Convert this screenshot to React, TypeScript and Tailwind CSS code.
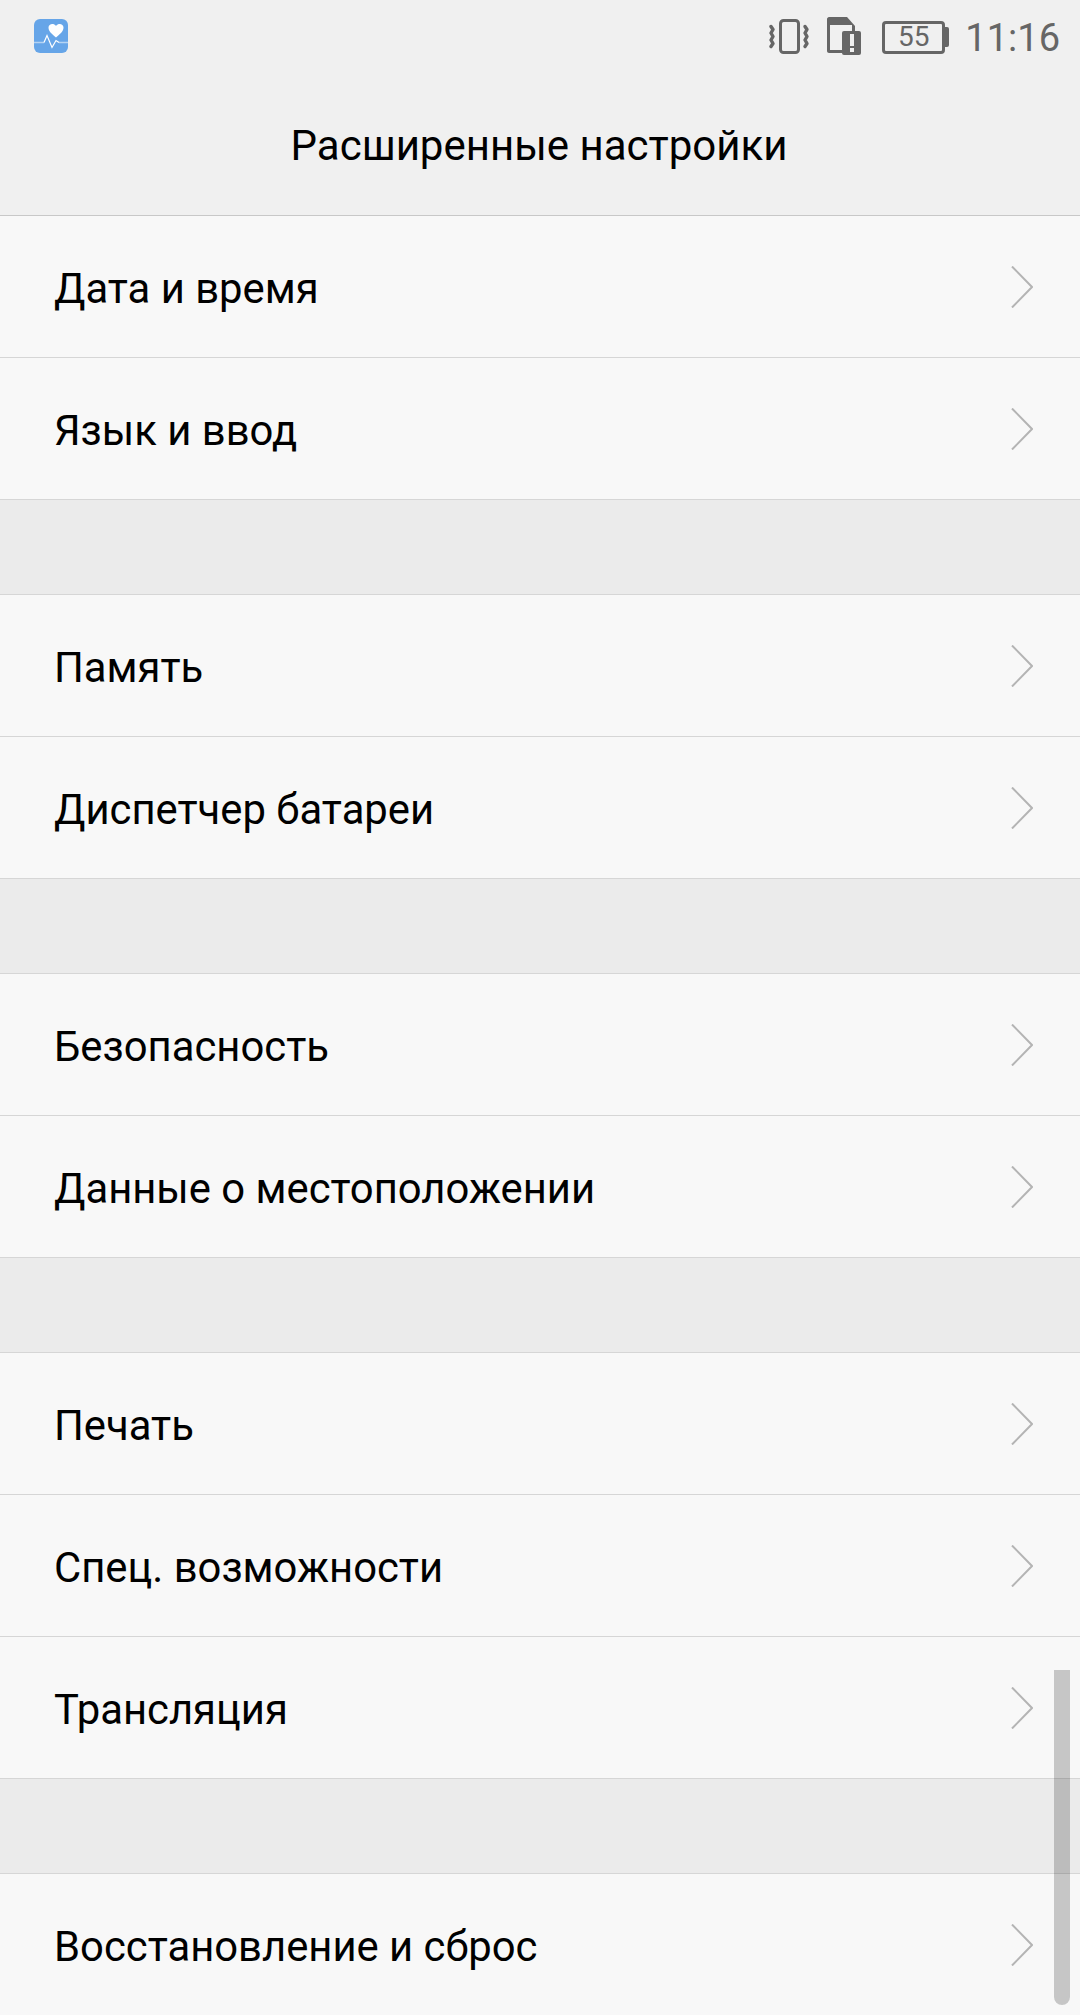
const font = { fontFamily: "Roboto, sans-serif" };

const groups = [
  ["Дата и время", "Язык и ввод"],
  ["Память", "Диспетчер батареи"],
  ["Безопасность", "Данные о местоположении"],
  ["Печать", "Спец. возможности", "Трансляция"],
  ["Восстановление и сброс"],
];

function AppIcon() {
  return (
    <svg width="34" height="34" viewBox="0 0 34 34">
      <rect width="34" height="34" rx="6" fill="#66a5e8" />
      <path d="M0 23.5H10M25 23.5H34" stroke="#b4d3f3" strokeWidth="1.5" fill="none" />
      <path d="M10 23.5L13 16.5L18 28.5L22 21.5L25 23.5" stroke="#fff" strokeWidth="1.2" fill="none" />
      <path d="M22 18.5C18 15 14.5 12.5 14.5 8.5C14.5 5 19.5 3.5 22 7C24.5 3.5 29.5 5 29.5 8.5C29.5 12.5 26 15 22 18.5Z" fill="#fff" />
    </svg>
  );
}

function VibrateIcon() {
  return (
    <svg width="40" height="35" viewBox="0 0 40 35" fill="none" stroke="#666" strokeLinecap="round" strokeLinejoin="round">
      <rect x="11.5" y="1.5" width="18" height="32" rx="3" strokeWidth="3" />
      <path d="M2 7.5L4 10.5L2 14L4 17.5L2 21L4 24.5L2 27.5" strokeWidth="3.4" />
      <path d="M36 7.5L38 10.5L36 14L38 17.5L36 21L38 24.5L36 27.5" strokeWidth="3.4" />
    </svg>
  );
}

function SimAlertIcon() {
  return (
    <svg width="34" height="38" viewBox="0 0 34 38">
      <path d="M2 0H20L28 9V36H2C1 36 0 35 0 34V2C0 1 1 0 2 0Z" fill="#666" />
      <rect x="3" y="8" width="22" height="25" fill="#f0f0f0" />
      <rect x="15" y="14" width="19" height="24" rx="2" fill="#666" />
      <rect x="23" y="17" width="4" height="12" fill="#f0f0f0" />
      <rect x="23" y="31" width="4" height="4" fill="#f0f0f0" />
    </svg>
  );
}

function BatteryIcon() {
  return (
    <div className="flex items-center">
      <div className="flex h-[33px] w-[63px] items-center justify-center rounded-[4px] border-[3px] border-[#666] text-[28px] leading-none text-[#666]">
        55
      </div>
      <div className="h-[20px] w-[4px] rounded-r-[2px] bg-[#666]" />
    </div>
  );
}

function Chevron() {
  return (
    <svg width="22" height="42" viewBox="0 0 22 42" fill="none" stroke="#b4b4b4" strokeWidth="2">
      <path d="M1 0.5L21 21L1 41.5" />
    </svg>
  );
}

function Row({ label }: { label: string }) {
  return (
    <div className="flex h-[142px] items-center justify-between border-b border-[#d6d6d6] bg-[#f8f8f8] pl-[54px] pr-[47px]">
      <span className="pt-[4px] text-[41.8px] leading-none text-black">{label}</span>
      <Chevron />
    </div>
  );
}

export default function App() {
  return (
    <div className="relative h-[2015px] w-[1080px] overflow-hidden bg-[#ebebeb]" style={font}>
      <div className="h-[216px] border-b border-[#c8c8c8] bg-[#f0f0f0]">
        <div className="flex h-[72px] items-center justify-between pl-[34px] pr-[20px]">
          <AppIcon />
          <div className="flex items-center">
            <VibrateIcon />
            <div className="ml-[18px]"><SimAlertIcon /></div>
            <div className="ml-[21px] pt-[2px]"><BatteryIcon /></div>
            <span className="ml-[16px] pt-[3px] text-[38px] leading-none text-[#666]">11:16</span>
          </div>
        </div>
        <div className="flex h-[143px] items-center justify-center pr-[2px] pt-[4px] text-[42px] leading-none text-black">
          Расширенные настройки
        </div>
      </div>
      {groups.map((g, i) => (
        <div key={i}>
          {g.map((label) => (
            <Row key={label} label={label} />
          ))}
          {i < groups.length - 1 && <div className="h-[95px] border-b border-[#d6d6d6]" />}
        </div>
      ))}
      <div className="absolute left-[1054px] top-[1670px] h-[335px] w-[16px] rounded-b-[8px] bg-black/20" />
    </div>
  );
}
